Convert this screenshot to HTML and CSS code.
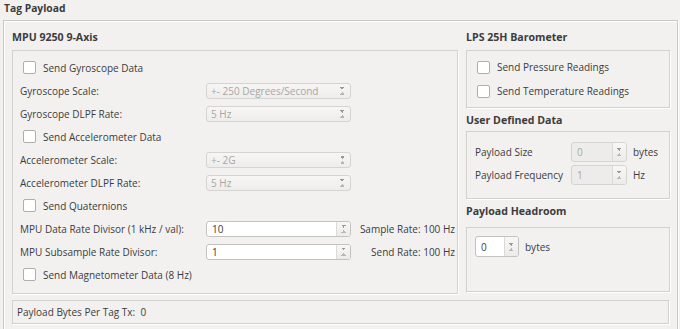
FILE: index.html
```html
<!DOCTYPE html>
<html lang="en">
<head>
    <meta charset="utf-8" />
    <title>Tag Payload</title>
    <link rel="stylesheet" href="styles.css">
</head>
<body>
<div class="page">
    <div class="page-title">Tag Payload</div>

    <div class="outer">
        <div class="columns">
            <!-- MPU section -->
            <section class="col-left">
                <div class="group-title first">MPU 9250 9-Axis</div>
                <div class="group-box mpu">
                    <div class="row check-row"><span class="check"></span>Send Gyroscope Data</div>
                    <div class="row">
                        <span class="label">Gyroscope Scale:</span>
                        <span class="combo disabled">+- 250 Degrees/Second<i class="arrows"></i></span>
                    </div>
                    <div class="row">
                        <span class="label">Gyroscope DLPF Rate:</span>
                        <span class="combo disabled">5 Hz<i class="arrows"></i></span>
                    </div>
                    <div class="row check-row"><span class="check"></span>Send Accelerometer Data</div>
                    <div class="row">
                        <span class="label">Accelerometer Scale:</span>
                        <span class="combo disabled">+- 2G<i class="arrows"></i></span>
                    </div>
                    <div class="row">
                        <span class="label">Accelerometer DLPF Rate:</span>
                        <span class="combo disabled">5 Hz<i class="arrows"></i></span>
                    </div>
                    <div class="row check-row"><span class="check"></span>Send Quaternions</div>
                    <div class="row">
                        <span class="label">MPU Data Rate Divisor (1 kHz / val):</span>
                        <span class="spin wide"><span class="spin-val">10</span><span class="spin-btn"><i class="arrows"></i></span></span>
                        <span class="note">Sample Rate: 100 Hz</span>
                    </div>
                    <div class="row">
                        <span class="label">MPU Subsample Rate Divisor:</span>
                        <span class="spin wide"><span class="spin-val">1</span><span class="spin-btn"><i class="arrows"></i></span></span>
                        <span class="note">Send Rate: 100 Hz</span>
                    </div>
                    <div class="row check-row"><span class="check"></span>Send Magnetometer Data (8 Hz)</div>
                </div>
            </section>

            <section class="col-right">
                <div class="group-title first">LPS 25H Barometer</div>
                <div class="group-box lps">
                    <div class="row check-row"><span class="check"></span>Send Pressure Readings</div>
                    <div class="row check-row"><span class="check"></span>Send Temperature Readings</div>
                </div>

                <div class="group-title user">User Defined Data</div>
                <div class="group-box user-box">
                    <div class="row">
                        <span class="label short">Payload Size</span>
                        <span class="spin small disabled"><span class="spin-val">0</span><span class="spin-btn"><i class="arrows"></i></span></span>
                        <span class="unit">bytes</span>
                    </div>
                    <div class="row">
                        <span class="label short">Payload Frequency</span>
                        <span class="spin small disabled"><span class="spin-val">1</span><span class="spin-btn"><i class="arrows"></i></span></span>
                        <span class="unit">Hz</span>
                    </div>
                </div>

                <div class="group-title head">Payload Headroom</div>
                <div class="group-box headroom">
                    <div class="row">
                        <span class="spin tiny"><span class="spin-val">0</span><span class="spin-btn"><i class="arrows"></i></span></span>
                        <span class="unit">bytes</span>
                    </div>
                </div>
            </section>
        </div>

        <div class="group-box footer">Payload Bytes Per Tag Tx:&nbsp;&nbsp;0</div>
    </div>
</div>
</body>
</html>
```

FILE: styles.css
```css
body {
    margin: 0;
    background-color: #f2f1f0;
    color: #3c3c3c;
    font-family: 'Open Sans', 'Noto Sans', sans-serif;
    font-size: 10px;
    white-space: nowrap;
    overflow: hidden;
    height: 329px;
}

.page {
    padding: 0 0 0 3px;
}

.page-title {
    font-weight: bold;
    font-size: 10.3px;
    height: 20px;
    line-height: 16px;
    padding-left: 1px;
}

.outer {
    width: 675px;
    height: 309px;
    border: 1px solid #cac8c5;
    border-bottom: 0;
    box-shadow: inset 1px 1px 0 #fff, 1px 0 0 #fff;
    padding: 0 8px;
    box-sizing: border-box;
}

.columns {
    display: grid;
    grid-template-columns: 446px 204px;
    column-gap: 8px;
}

.group-title {
    font-weight: bold;
    font-size: 10.6px;
    line-height: 16px;
}

.group-title.first {
    padding-top: 8px;
    height: 21px;
}

.group-title.user {
    padding-top: 4px;
    height: 19px;
}

.group-title.head {
    padding-top: 4px;
    height: 24px;
}

.group-box {
    border: 1px solid #d3d1ce;
    box-shadow: 1px 1px 0 #fff;
    box-sizing: border-box;
}

.mpu {
    height: 244px;
    padding: 5px 0 0 7px;
}

.lps {
    height: 58px;
    padding: 4px 0 0 7px;
}

.user-box {
    height: 68px;
    padding: 8px 0 0 8px;
}

.headroom {
    height: 65px;
    padding: 7px 0 0 8px;
}

.footer {
    margin-top: 6px;
    height: 24px;
    line-height: 22px;
    padding-left: 4px;
}

.row {
    display: flex;
    align-items: center;
    height: 23px;
}

.lps .row {
    height: 24px;
}

.check-row {
    padding-left: 3px;
}

.check {
    width: 11px;
    height: 11px;
    border: 1px solid #b0aeab;
    border-radius: 2px;
    background: #fff;
    margin-right: 7px;
}

.label {
    width: 186px;
    flex-shrink: 0;
}

.label.short {
    width: 96px;
}

.combo, .spin {
    position: relative;
    display: flex;
    align-items: center;
    box-sizing: border-box;
    border: 1px solid #c4c2bf;
    border-radius: 3px;
    height: 16px;
}

.combo {
    width: 145px;
    padding-left: 4px;
}

.combo.disabled {
    color: #a8a6a4;
    background: linear-gradient(#f7f6f5, #eeedec);
    border-color: #d6d4d1;
}

.combo .arrows {
    position: absolute;
    right: 5px;
    top: 3px;
}

.arrows {
    display: block;
    width: 5px;
    height: 8px;
    background:
        linear-gradient(to top right, transparent 50%, #9a9896 50%) 0 0 / 3px 3px no-repeat,
        linear-gradient(to top left, transparent 50%, #9a9896 50%) 2px 0 / 3px 3px no-repeat,
        linear-gradient(to bottom right, transparent 50%, #b8b6b4 50%) 0 5px / 3px 3px no-repeat,
        linear-gradient(to bottom left, transparent 50%, #b8b6b4 50%) 2px 5px / 3px 3px no-repeat;
}

.spin {
    background: #fff;
    overflow: hidden;
}

.spin-val {
    flex: 1;
    padding-left: 5px;
}

.spin-btn {
    width: 13px;
    height: 100%;
    border-left: 1px solid #dcdad7;
    background: linear-gradient(#f8f7f6, #ecebea);
    display: flex;
    align-items: center;
    justify-content: center;
}

.spin.wide {
    width: 145px;
}

.spin.small {
    width: 56px;
    height: 20px;
}

.spin.tiny {
    width: 44px;
    height: 21px;
}

.spin.disabled {
    background: #edecea;
    color: #aaa8a6;
    border-color: #d6d4d1;
}

.note {
    width: 104px;
    text-align: right;
}

.unit {
    margin-left: 6px;
}
```
